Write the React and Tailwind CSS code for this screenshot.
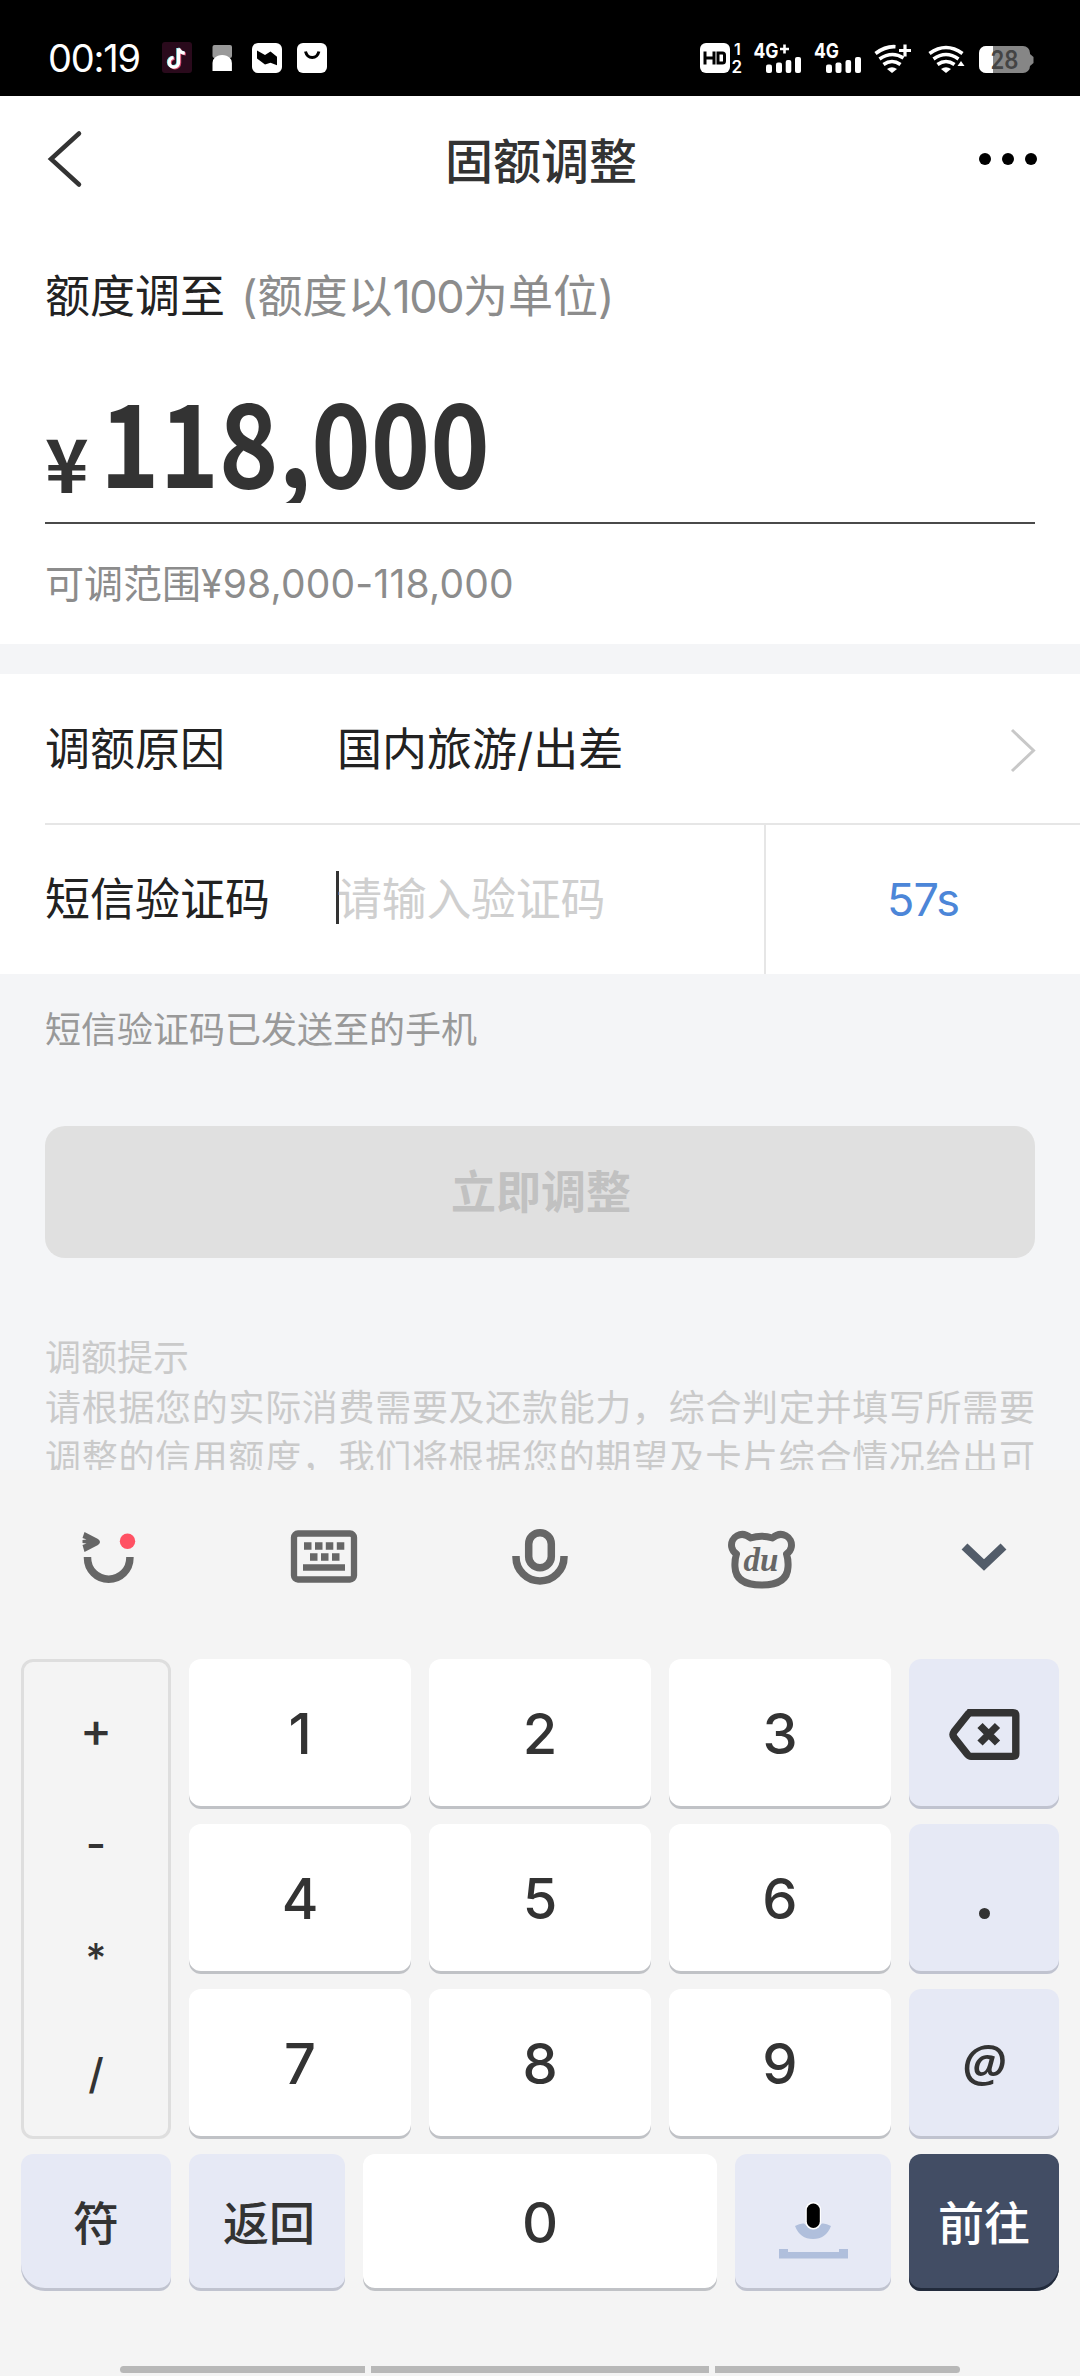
import React from "react";

const INK = "#333333";
const GREY = "#666666";

function StatusBar() {
  return (
    <div className="h-24 bg-black text-white flex items-start shrink-0">
      <div className="ml-12 mt-9 w-[94px] h-11 leading-[44px] text-[38px] tracking-[-1.2px] whitespace-nowrap">00:19</div>
      <svg className="ml-5 mt-[42px]" width="166" height="31" viewBox="162 42 166 31">
        <rect x="162" y="42" width="30" height="31" rx="3" fill="#2a0a1c" />
        <g fill="none" strokeWidth="3.2">
          <path d="M178.600 48.500V62.500a4.700 4.700 0 1 1-5-4.800M178.600 48.500q1.500 4.500 6.200 4.700" stroke="#d8486c" transform="translate(1 .8)" />
          <path d="M178.600 48.500V62.500a4.700 4.700 0 1 1-5-4.800M178.600 48.500q1.500 4.500 6.200 4.700" stroke="#7fe0e6" transform="translate(-.8 -.4)" />
          <path d="M178.600 48.500V62.500a4.700 4.700 0 1 1-5-4.800M178.600 48.500q1.500 4.500 6.200 4.700" stroke="#fff" />
        </g>
        <rect x="212.500" y="45" width="19.500" height="13" rx="2" fill="#999" />
        <path d="M212.500 71V63a6 6 0 0 1 2-5q3-3 7.700-3t7.700 3a6 6 0 0 1 2 5v8z" fill="#fff" />
        <rect x="252" y="43" width="30" height="30" rx="6" fill="#fff" />
        <path d="M257 50.500l8 4.500 5.500-3.500 6.500 5.200v8.500l-6.500-2.500-5.500 1.800-8-6z" fill="#000" />
        <rect x="297" y="43" width="30" height="30" rx="6" fill="#fff" />
        <path d="M305.500 51.500q1.500 6 6.700 6t6.700-6" fill="none" stroke="#000" strokeWidth="3" />
      </svg>
      <svg className="ml-[370px] mt-10" width="340" height="36" viewBox="697 40 340 36">
        <rect x="699" y="43" width="30" height="30" rx="6" fill="#fff" />
        <path d="M704 51.500v13M713 51.500v13M704 58h9M717 53h4.500a2 2 0 0 1 2 2v6a2 2 0 0 1-2 2H717z" fill="none" stroke="#000" strokeWidth="3" />
        <text x="733" y="55" fontSize="16" fontWeight="600" fill="#fff">1</text>
        <text x="730.500" y="73" fontSize="17" fontWeight="600" fill="#fff">2</text>
        <text x="752.500" y="58" fontSize="20.500" fontWeight="700" fill="#fff" textLength="25" lengthAdjust="spacingAndGlyphs">4G</text>
        <path d="M783.500 44.500v9M779 49h9" stroke="#fff" strokeWidth="2.600" />
        <text x="813" y="58" fontSize="20.500" fontWeight="700" fill="#fff" textLength="25" lengthAdjust="spacingAndGlyphs">4G</text>
        <g fill="#fff">
          <rect x="765" y="64.500" width="6" height="8.500" rx="2" />
          <rect x="775" y="62.500" width="6" height="10.500" rx="2" />
          <rect x="784.700" y="60" width="5.600" height="13" rx="2" />
          <rect x="794" y="57" width="6" height="16" rx="2" />
          <rect x="825" y="64.500" width="6" height="8.500" rx="2" />
          <rect x="834.500" y="62.500" width="6" height="10.500" rx="2" />
          <rect x="844.500" y="60" width="5.600" height="13" rx="2" />
          <rect x="854" y="57" width="6" height="16" rx="2" />
          <path d="M886 69l5 4 5-4q-5-3.500-10 0z" />
          <path d="M940 69l5 4 5-4q-5-3.500-10 0z" />
          <path d="M956.500 66l3.500-5 3.500 5z" />
        </g>
        <g fill="none" stroke="#fff" strokeWidth="3.600">
          <path d="M874.500 53.500q10-7.500 20-6.800M878.500 59q12.500-8.500 24-1M882.500 64.500q8.500-6 17 0" />
          <path d="M928.500 53.500q16.500-12 33 0M932.500 59q12.500-9 25 0M936.500 64.500q8.500-6 17 0" />
          <path d="M904 44.500v12M898 50.500h12" strokeWidth="3.200" />
        </g>
        <rect x="978" y="46" width="51" height="27" rx="7" fill="#868686" />
        <path d="M1029 54l3.500 3v6l-3.500 3z" fill="#868686" />
        <path d="M992 46H985a7 7 0 0 0-7 7v13a7 7 0 0 0 7 7h7z" fill="#fff" />
        <text x="1003.500" y="69" fontSize="25" fontWeight="600" fill="#444" textAnchor="middle" textLength="28" lengthAdjust="spacingAndGlyphs">28</text>
      </svg>
    </div>
  );
}

function Header() {
  return (
    <div className="h-[126px] flex items-center justify-between pl-11 pr-[42px] shrink-0">
      <svg width="60" height="60" viewBox="44 129 60 60">
        <path d="M79 133.500L51 159l28 25.500" fill="none" stroke={INK} strokeWidth="4.500" strokeLinecap="round" />
      </svg>
      <div className="pt-1.5 text-[48px] font-medium leading-[60px] text-[#333]">固额调整</div>
      <svg width="60" height="14" viewBox="978 152 60 14">
        <circle cx="985" cy="159" r="6" />
        <circle cx="1008" cy="159" r="6" />
        <circle cx="1031" cy="159" r="6" />
      </svg>
    </div>
  );
}

function Amount() {
  return (
    <div className="h-[422px] px-[45px] shrink-0">
      <div className="pt-[45px] h-[105px] flex text-[45px] leading-[60px] whitespace-nowrap">
        <span className="text-[#222]">额度调至</span>
        <span className="ml-4 text-[#8c8c8c]">(额度以<span className="tracking-[-1.5px]">100</span>为单位)</span>
      </div>
      <div className="mt-[54px] h-[122px] overflow-hidden flex text-[#333] font-bold font-['Noto_Sans_CJK_SC',sans-serif]">
        <span className="w-[55px] text-[74px] leading-[92px] pt-[34px]">¥</span>
        <span className="text-[115px] leading-[110px] pt-[2px] origin-left scale-x-[0.877]">118,000</span>
      </div>
      <div className="mt-[19px] h-0.5 bg-[#4a4a4a]" />
      <div className="mt-[30px] text-[39px] leading-[60px] text-[#8c8c8c] whitespace-nowrap">可调范围<span className="tracking-[0.200px]">¥98,000-118,000</span></div>
    </div>
  );
}

function Form() {
  return (
    <div className="text-[45px] leading-[60px] text-[#222] shrink-0">
      <div className="h-[149px] ml-[45px] pr-[44px] pt-0.5 flex items-center">
        <span className="w-[292px]">调额原因</span>
        <span className="flex-1">国内旅游/出差</span>
        <svg width="28" height="48" viewBox="1008 725 28 48">
          <path d="M1012 729l21.500 20.500L1012 770" fill="none" stroke="#c8c8c8" strokeWidth="3" />
        </svg>
      </div>
      <div className="h-0.5 ml-[45px] bg-[#e6e6e6]" />
      <div className="h-[149px] pl-[45px] flex">
        <span className="w-[291px] self-center">短信验证码</span>
        <span className="w-[3px] h-[53px] mt-[46px] bg-[#333]" />
        <span className="w-[427px] -ml-0.5 self-center text-[#cfcfcf] tracking-[-0.300px]">请输入验证码</span>
        <span className="w-0.5 bg-[#e6e6e6]" />
        <span className="flex-1 self-center text-center text-[#4c86d8] tracking-[-1px]">57s</span>
      </div>
    </div>
  );
}

function Tips() {
  return (
    <div className="h-[496px] overflow-hidden bg-[#f4f5f7] px-[45px] text-[36px] shrink-0 whitespace-nowrap">
      <div className="pt-[31px] leading-[50px] text-[#999]">短信验证码已发送至的手机</div>
      <div className="mt-[71px] h-[132px] rounded-[20px] bg-[#e0e0e0] flex items-center justify-center pt-0.5 pl-0.5 text-[45px] font-bold text-[#c1c1c1]">立即调整</div>
      <div className="mt-[75px] leading-[50px] text-[#cacaca]">
        <div>调额提示</div>
        <div className="tracking-[0.690px]">请根据您的实际消费需要及还款能力，综合判定并填写所需要</div>
        <div className="tracking-[0.690px]">调整的信用额度，我们将根据您的期望及卡片综合情况给出可</div>
      </div>
    </div>
  );
}

function Toolbar() {
  return (
    <div className="h-[189px] flex items-start pl-20 pt-[56px] shrink-0">
      <svg width="60" height="64" viewBox="80 1526 60 64">
        <path d="M87.500 1557v1a21.200 21.200 0 0 0 42.400 0v-1" fill="none" stroke={GREY} strokeWidth="7.500" />
        <path d="M84.500 1532l13.500 7q4 3 0 6l-13.500 7-2-7 4-1.500-4-.5v-3l4-.5-4-1.500z" fill={GREY} />
        <circle cx="127.500" cy="1541.300" r="7.700" fill="#ff5163" />
      </svg>
      <svg className="ml-[148px]" width="72" height="64" viewBox="288 1526 72 64">
        <rect x="294" y="1533.500" width="60" height="46" rx="4" fill="none" stroke={GREY} strokeWidth="6.300" />
        <path d="M304 1546h7.500m3.500 0h7.500m3.300 0h7.500m3.500 0h7.500M310 1557h7.500m3.500 0h7.500m3.500 0h7.500" stroke={GREY} strokeWidth="7.500" />
        <path d="M303 1567.500h42" stroke={GREY} strokeWidth="6.300" />
      </svg>
      <svg className="ml-[148px]" width="64" height="64" viewBox="508 1526 64 64">
        <g fill="none" stroke={GREY} strokeWidth="7.500">
          <rect x="528.700" y="1532.700" width="22.600" height="35" rx="11.300" />
          <path d="M516 1556v1a24 24 0 0 0 48 0v-1" />
        </g>
      </svg>
      <svg className="ml-[152px]" width="76" height="68" viewBox="724 1526 76 68">
        <path d="M750.500 1538q11-3.500 22 0c9-8 20.500-1 18.800 9q-.8 4.500-4.800 7 2 6 1.500 13c-.5 12-9 18-26.500 18s-26-6-26.500-18q-.500-7 1.500-13-4-2.500-4.800-7c-1.700-10 9.800-17 18.800-9z" fill="none" stroke={GREY} strokeWidth="7" strokeLinejoin="round" />
        <text x="761" y="1571" fontSize="33" fontWeight="700" fontStyle="italic" fill={GREY} textAnchor="middle" fontFamily="Liberation Serif, serif" textLength="35" lengthAdjust="spacingAndGlyphs">du</text>
      </svg>
      <svg className="ml-[156px]" width="56" height="64" viewBox="956 1526 56 64">
        <path d="M964.500 1546.500l19.500 18.500 19.500-18.500" fill="none" stroke="#525c69" strokeWidth="8.500" />
      </svg>
    </div>
  );
}

function Key({ children, className = "", tone = "light" }) {
  const tones = {
    light: "bg-white text-[#333] shadow-[inset_0_-3px_0_#c0c2c6]",
    soft: "bg-[#e6e9f5] text-[#333] shadow-[inset_0_-3px_0_#c0c3cf]",
    dark: "bg-[#424d64] text-white shadow-[inset_0_-3px_0_#222b3c]",
  };
  return (
    <div className={`rounded-xl flex items-center justify-center font-medium ${tones[tone]} ${className}`}>{children}</div>
  );
}

function Keyboard() {
  const digits = [["1", "2", "3"], ["4", "5", "6"], ["7", "8", "9"]];
  return (
    <div className="bg-[#f4f4f4] h-[906px] flex flex-col">
      <Toolbar />
      <div className="flex gap-[18px] px-[21px] h-[480px]">
        <div className="w-[150px] h-full rounded-xl border-3 border-[#dedede] text-[#333] text-[40px] font-medium leading-[60px] text-center">
          <div className="h-[60px] mt-[38px] text-[48px]">+</div>
          <div className="h-[60px] mt-[54px] text-[44px]">-</div>
          <div className="h-[60px] mt-[54px]">*</div>
          <div className="h-[60px] mt-[56px] text-[42px]">/</div>
        </div>
        <div className="flex-1 flex flex-col gap-[15px]">
          {digits.map((row, i) => (
            <div key={i} className="flex gap-[18px] text-[56px] h-[150px]">
              {row.map((d) => (
                <Key key={d} className="w-[222px]">{d}</Key>
              ))}
              <Key tone="soft" className="w-[150px]">
                {i === 0 && (
                  <svg width="72" height="54" viewBox="949 1707 72 54">
                    <path d="M972 1712.800h42q2.800 0 2.800 2.800v38q0 2.800-2.800 2.800h-42q-2 0-3.500-2l-13.500-17q-2-2.800 0-5.600l13.500-17q1.500-2 3.500-2z" fill="none" stroke={INK} strokeWidth="7.400" />
                    <path d="M981 1725.500l17.500 17.500M998.500 1725.500l-17.500 17.500" stroke={INK} strokeWidth="7.400" />
                  </svg>
                )}
                {i === 1 && <span className="h-[11px] w-[11px] mt-[28px] rounded-full bg-[#333]" />}
                {i === 2 && <span className="pb-1.5 text-[51px] italic font-semibold font-['Open_Sans',sans-serif]">@</span>}
              </Key>
            </div>
          ))}
        </div>
      </div>
      <div className="mt-[15px] flex gap-[18px] px-[21px] h-[137px] text-[46px]">
        <Key tone="soft" className="w-[150px] pt-0.5 rounded-bl-3xl">符</Key>
        <Key tone="soft" className="w-[156px] pt-0.5 pl-1">返回</Key>
        <Key className="w-[354px] text-[56px]">0</Key>
        <Key tone="soft" className="w-[156px]">
          <svg className="mt-[15px]" width="72" height="60" viewBox="777 2200 72 60">
            <path d="M795 2226q5-3 9-2.500 9 8.500 18 0 4-.5 9 2.500-5 13-18 13t-18-13z" fill="#b0bfdc" />
            <path d="M779 2249h9v3h51v-3h9v9.500h-69z" fill="#b0bfdc" />
            <rect x="805.500" y="2202" width="15.500" height="27.500" rx="7.500" fill="#fff" />
            <rect x="806.800" y="2203.500" width="13" height="24.500" rx="6.500" />
          </svg>
        </Key>
        <Key tone="dark" className="w-[150px] pt-0.5 rounded-br-3xl">前往</Key>
      </div>
      <div className="mt-[75px] flex gap-1.5 px-[120px] h-[7px]">
        <div className="w-[245px] rounded-l-full bg-[#b8b8b8]" />
        <div className="w-[338px] bg-[#b8b8b8]" />
        <div className="flex-1 rounded-r-full bg-[#b8b8b8]" />
      </div>
    </div>
  );
}

export default function App() {
  return (
    <div className="w-[1080px] h-[2376px] overflow-hidden flex flex-col bg-white font-['Inter','Noto_Sans_CJK_SC',sans-serif]">
      <StatusBar />
      <Header />
      <Amount />
      <div className="h-[30px] bg-[#f4f5f7] shrink-0" />
      <Form />
      <Tips />
      <Keyboard />
    </div>
  );
}
